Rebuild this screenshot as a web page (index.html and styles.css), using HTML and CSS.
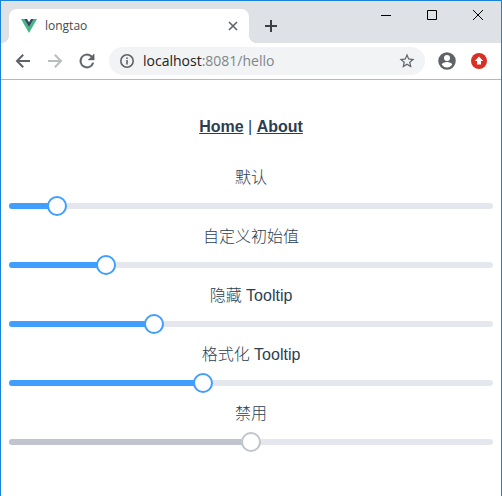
FILE: index.html
```html
<!DOCTYPE html>
<html lang="zh-CN">
<head>
<meta charset="utf-8">
<title>longtao</title>
<link rel="stylesheet" href="styles.css">
</head>
<body>
<div class="window">
  <header class="tabstrip">
    <div class="tab">
      <svg class="favicon" width="16" height="16" viewBox="0 0 16 16" aria-hidden="true">
        <path fill="#41b883" d="M0 1h3.2L8 9.2 12.8 1H16L8 15z"/>
        <path fill="#35495e" d="M3.2 1H6l2 3.3L10 1h2.8L8 9.2z"/>
      </svg>
      <span class="tab-title">longtao</span>
      <button class="tab-close" aria-label="Close tab">
        <svg width="10" height="10" viewBox="0 0 10 10"><path d="M1 1l8 8M9 1l-8 8" stroke="#5f6368" stroke-width="1.6"/></svg>
      </button>
    </div>
    <button class="new-tab" aria-label="New tab">
      <svg width="12" height="12" viewBox="0 0 12 12"><path d="M6 0v12M0 6h12" stroke="#3c4043" stroke-width="2"/></svg>
    </button>
    <div class="window-controls">
      <button aria-label="Minimize"><svg width="10" height="10" viewBox="0 0 10 10"><path d="M0 5.5h10" stroke="#000"/></svg></button>
      <button aria-label="Maximize"><svg width="10" height="10" viewBox="0 0 10 10"><path d="M.5.5h9v9h-9z" fill="none" stroke="#000"/></svg></button>
      <button aria-label="Close"><svg width="10" height="10" viewBox="0 0 10 10"><path d="M0 0l10 10M10 0L0 10" stroke="#000"/></svg></button>
    </div>
  </header>
  <div class="toolbar">
    <button aria-label="Back"><svg width="20" height="20" viewBox="0 0 20 20"><path d="M17 10H4.5M10.2 3.8L4 10l6.2 6.2" fill="none" stroke="#5f6368" stroke-width="2"/></svg></button>
    <button aria-label="Forward" disabled><svg width="20" height="20" viewBox="0 0 20 20"><path d="M3 10h12.5M9.8 3.8L16 10l-6.2 6.2" fill="none" stroke="#babcbe" stroke-width="2"/></svg></button>
    <button aria-label="Reload"><svg width="20" height="20" viewBox="1 1 22 22"><path fill="#5f6368" stroke="#5f6368" stroke-width=".3" d="M17.65 6.35A8 8 0 1 0 19.73 14h-2.08A6 6 0 1 1 12 6c1.66 0 3.14.69 4.22 1.78L13 11h7V4z"/></svg></button>
    <div class="omnibox">
      <svg width="16" height="16" viewBox="0 0 16 16" aria-hidden="true"><circle cx="8" cy="8" r="6.2" fill="none" stroke="#5f6368" stroke-width="1.6"/><path d="M8 7v4.5M8 4.4V6" stroke="#5f6368" stroke-width="1.6"/></svg>
      <span class="url">localhost<span class="url-rest">:8081/hello</span></span>
      <button aria-label="Bookmark"><svg width="18" height="18" viewBox="0 0 24 24"><path fill="#5f6368" d="M22 9.24l-7.19-.62L12 2 9.19 8.63 2 9.24l5.46 4.73L5.82 21 12 17.27 18.18 21l-1.63-7.03zM12 15.4l-3.76 2.27 1-4.28-3.32-2.88 4.38-.38L12 6.1l1.71 4.04 4.38.38-3.32 2.88 1 4.28z"/></svg></button>
    </div>
    <button class="profile" aria-label="Profile"><svg width="20" height="20" viewBox="0 0 24 24"><path fill="#5f6368" fill-rule="evenodd" d="M12 1.5a10.5 10.5 0 1 0 0 21 10.5 10.5 0 0 0 0-21zm0 3.3a3.6 3.6 0 1 1 0 7.2 3.6 3.6 0 0 1 0-7.2zM12 19.8a7.5 7.5 0 0 1-6.2-3.3c0-2.1 4.1-3.2 6.2-3.2s6.2 1.1 6.2 3.2a7.5 7.5 0 0 1-6.2 3.3z"/></svg></button>
    <button aria-label="Update"><svg width="16" height="16" viewBox="0 0 16 16"><circle cx="8" cy="8" r="8" fill="#d93025"/><path fill="#fff" d="M8 3.6L12.2 8H10v3.6H6V8H3.8z"/></svg></button>
  </div>
  <main class="page">
    <nav class="nav"><a href="#home">Home</a> | <a href="#about">About</a></nav>
    <div class="block">
      <label for="s1">默认</label>
      <div class="slider"><div class="rail"><div class="bar" style="width:10%"></div></div><input id="s1" type="range" value="10"></div>
    </div>
    <div class="block">
      <label for="s2">自定义初始值</label>
      <div class="slider"><div class="rail"><div class="bar" style="width:20%"></div></div><input id="s2" type="range" value="20"></div>
    </div>
    <div class="block">
      <label for="s3">隐藏 Tooltip</label>
      <div class="slider"><div class="rail"><div class="bar" style="width:30%"></div></div><input id="s3" type="range" value="30"></div>
    </div>
    <div class="block">
      <label for="s4">格式化 Tooltip</label>
      <div class="slider"><div class="rail"><div class="bar" style="width:40%"></div></div><input id="s4" type="range" value="40"></div>
    </div>
    <div class="block">
      <label for="s5">禁用</label>
      <div class="slider disabled"><div class="rail"><div class="bar" style="width:50%"></div></div><input id="s5" type="range" value="50" disabled></div>
    </div>
  </main>
</div>
</body>
</html>
```
FILE: styles.css
```css
* { box-sizing: border-box; }
body { margin: 0; background: #fff; }
button { display: grid; place-items: center; padding: 0; border: 0; background: none; }
svg { display: block; }

.window {
  min-height: 100vh;
  border: 1px solid #1883d7;
  border-bottom: 0;
  overflow: hidden;
}

.tabstrip { display: flex; height: 42px; padding-left: 8px; background: #dee1e6; }
.tab {
  position: relative;
  display: flex;
  align-items: center;
  width: 240px;
  margin-top: 8px;
  padding: 0 10px 0 12px;
  border-radius: 8px 8px 0 0;
  background: #fff;
}
.tab::before, .tab::after {
  content: "";
  position: absolute;
  bottom: 0;
  width: 8px;
  height: 8px;
}
.tab::before { right: 100%; background: radial-gradient(circle at 0 0, #dee1e6 8px, #fff 8px); }
.tab::after { left: 100%; background: radial-gradient(circle at 100% 0, #dee1e6 8px, #fff 8px); }
.tab-title { flex: 1; margin-left: 8px; font: 12px/16px "Open Sans", sans-serif; color: #45494d; }
.tab-close { width: 12px; height: 16px; }
.new-tab { width: 28px; height: 28px; margin: 11px 0 0 8px; }
.window-controls { display: flex; margin-left: auto; }
.window-controls button { width: 46px; height: 28px; }

.toolbar {
  display: flex;
  align-items: center;
  gap: 12px;
  height: 37px;
  padding: 0 14px 0 12px;
  border-bottom: 1px solid #b6b6b8;
}
.omnibox {
  display: flex;
  flex: 1;
  align-items: center;
  gap: 8px;
  height: 28px;
  padding: 0 9px 0 10px;
  border-radius: 14px;
  background: #f1f3f4;
}
.profile { margin-right: 2px; }
.url { flex: 1; font: 14px/20px "Open Sans", sans-serif; color: #202124; }
.url-rest { color: #80868b; }

.page {
  padding: 8px 8px 0;
  font: 16px/21px "Liberation Sans", "Noto Sans CJK SC", sans-serif;
  color: #2c3e50;
  text-align: center;
}
.nav { padding: 30px 30px 31px; line-height: 18px; }
.nav a { font-weight: bold; color: #2c3e50; }
.block { display: flex; flex-direction: column; }
.block label { height: 21px; font-weight: 300; }

.slider {
  display: grid;
  grid-template-rows: 6px;
  align-items: center;
  margin: 15px 0 17px;
}
.rail, .slider input { grid-area: 1 / 1; }
.rail { height: 6px; border-radius: 3px; background: #e4e7ed; }
.bar { height: 6px; border-radius: 3px 0 0 3px; background: #409eff; }
.slider input {
  appearance: none;
  width: calc(100% + 20px);
  height: 20px;
  margin: 0 -10px;
  background: none;
}
.slider input::-webkit-slider-thumb {
  appearance: none;
  width: 20px;
  height: 20px;
  border: 2px solid #409eff;
  border-radius: 50%;
  background: #fff;
}
.disabled .bar { background: #c0c4cc; }
.disabled input::-webkit-slider-thumb { border-color: #c0c4cc; }
```
